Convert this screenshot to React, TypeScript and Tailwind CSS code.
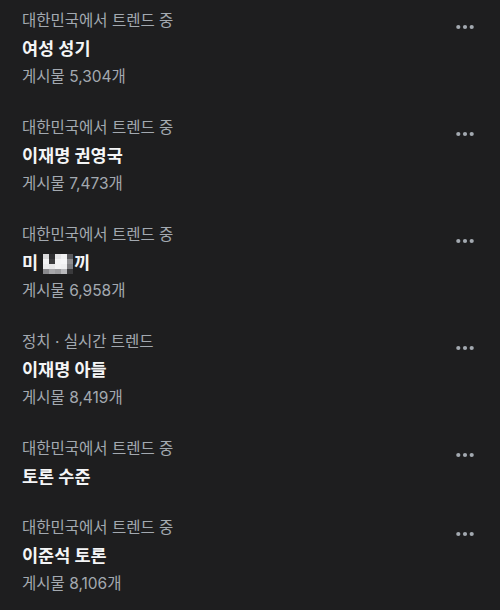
import React from 'react';

type Trend = {
  category: string;
  title: React.ReactNode;
  posts?: string;
};

// pixelated (censored) glyph block
const mosaic = [
  ['#d8d8da', '#2e2e30', '#e4e4e6', '#f0f0f1', '#5a5a5d'],
  ['#f2f2f3', '#3b3b3d', '#f4f4f5', '#f6f6f7', '#8d8d90'],
  ['#ececed', '#e6e6e7', '#f2f2f3', '#efeff0', '#7c7c7f'],
  ['#8a8a8d', '#a7a7aa', '#9c9c9f', '#b9b9bc', '#3a3a3c'],
];

const Mosaic = () => (
  <span className="flex flex-col ml-[5px] mr-[1px] mt-[2px]">
    {mosaic.map((row, r) => (
      <span key={r} className="flex">
        {row.map((c, i) => (
          <span key={i} className="block w-[6px] h-[5px]" style={{ backgroundColor: c }} />
        ))}
      </span>
    ))}
  </span>
);

const trends: Trend[] = [
  { category: '대한민국에서 트렌드 중', title: '여성 성기', posts: '게시물 5,304개' },
  { category: '대한민국에서 트렌드 중', title: '이재명 권영국', posts: '게시물 7,473개' },
  {
    category: '대한민국에서 트렌드 중',
    title: (
      <>
        <span>미</span>
        <Mosaic />
        <span>끼</span>
      </>
    ),
    posts: '게시물 6,958개',
  },
  { category: '정치 · 실시간 트렌드', title: '이재명 아들', posts: '게시물 8,419개' },
  { category: '대한민국에서 트렌드 중', title: '토론 수준' },
  { category: '대한민국에서 트렌드 중', title: '이준석 토론', posts: '게시물 8,106개' },
];

const MoreDots = () => (
  <svg width="18" height="6" viewBox="0 0 18 6" className="text-[#a3a9b0]">
    <circle cx="2.3" cy="3" r="2.1" fill="currentColor" />
    <circle cx="9" cy="3" r="2.1" fill="currentColor" />
    <circle cx="15.7" cy="3" r="2.1" fill="currentColor" />
  </svg>
);

export default function App() {
  return (
    <div
      className="w-[500px] h-[615px] overflow-hidden bg-[#1e1e1f] -mt-[5px]"
      style={{ fontFamily: 'Inter, "Noto Sans CJK KR", sans-serif' }}
    >
      {trends.map((t, i) => (
        <div key={i} className="flex items-start justify-between pl-[22px] pr-[26px] pt-[12px] pb-[11px]">
          <div className="flex flex-col">
            <span className="text-[15.5px] leading-[28px] text-[#a3a9b0]">{t.category}</span>
            <span className="flex items-center h-[28px] text-[17.5px] leading-[28px] font-bold text-[#f4f5f6]">
              {t.title}
            </span>
            {t.posts && <span className="text-[15.5px] leading-[28px] text-[#a3a9b0]">{t.posts}</span>}
          </div>
          <div className="pt-[17px]">
            <MoreDots />
          </div>
        </div>
      ))}
    </div>
  );
}
